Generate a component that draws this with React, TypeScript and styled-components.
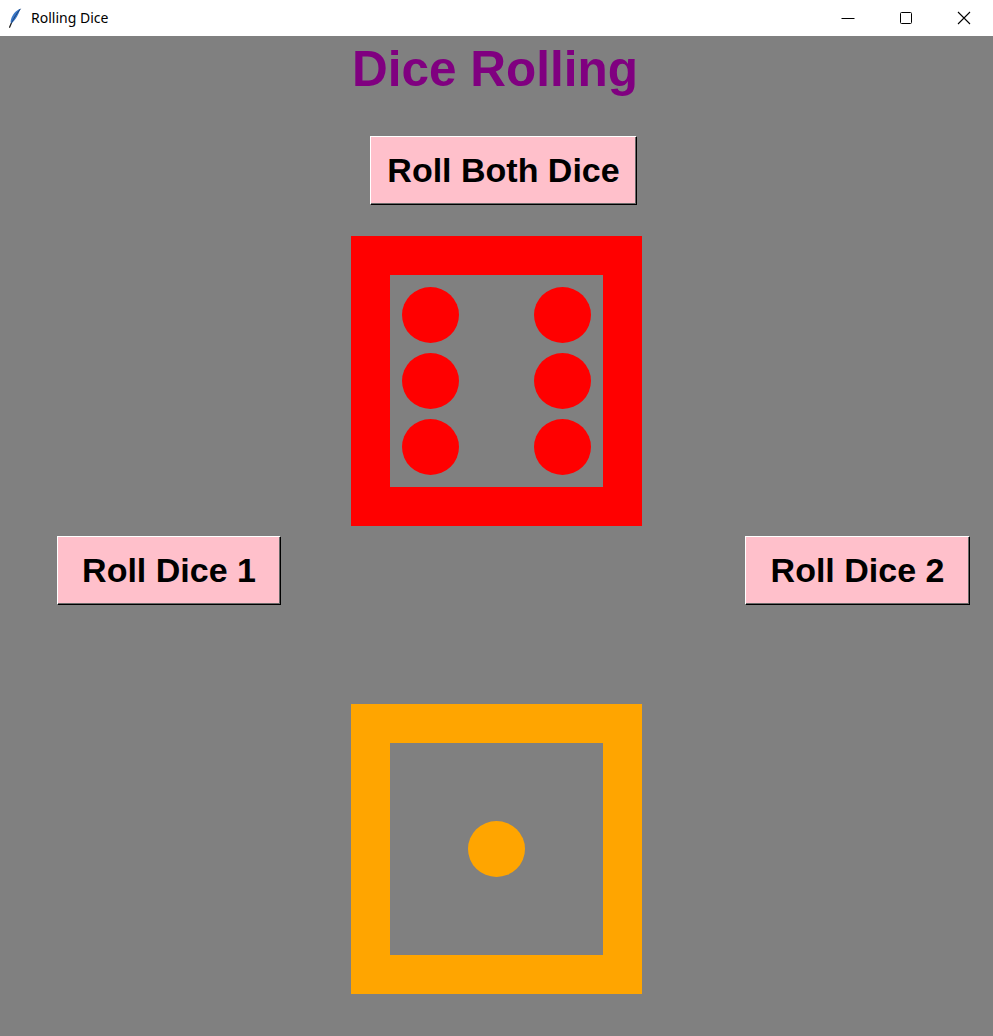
import React from 'react';
import styled, { createGlobalStyle } from 'styled-components';

const GlobalStyle = createGlobalStyle`
  html, body {
    margin: 0;
    padding: 0;
    background: #808080;
    overflow: hidden;
  }

  body {
    font-family: 'Liberation Sans', Arial, sans-serif;
  }

  #root {
    width: 993px;
    height: 1036px;
  }
`;

const Window = styled.div`
  width: 993px;
  height: 1036px;
  display: flex;
  flex-direction: column;
  background: #808080;
`;

const TitleBar = styled.div`
  height: 36px;
  flex: none;
  display: flex;
  align-items: center;
  background: #ffffff;
`;

const AppIcon = styled.svg`
  width: 14px;
  height: 20px;
  margin: 0 9px 0 8px;
  flex: none;
`;

const WindowTitle = styled.span`
  flex: 1;
  font-family: 'Noto Sans', 'Open Sans', sans-serif;
  font-size: 14px;
  color: #000000;
  padding-bottom: 1px;
`;

const ControlButton = styled.div`
  width: 58px;
  height: 36px;
  display: flex;
  align-items: center;
  justify-content: center;
`;

const Canvas = styled.main`
  flex: 1;
  display: grid;
  grid-template-columns: 57px 224px 70px 291px 103px 225px;
  grid-template-rows: 100px 69px 31px 290px 10px 69px 99px 290px;
`;

const Title = styled.h1`
  grid-column: 4;
  grid-row: 1;
  justify-self: center;
  align-self: start;
  margin: 8px 0 0 -3px;
  font-family: 'Liberation Sans', Arial, sans-serif;
  font-weight: 700;
  font-size: 49.5px;
  line-height: 1;
  white-space: nowrap;
  color: #800080;
`;

const RollButton = styled.button<{ $col: number; $row: number; $shift?: number }>`
  grid-column: ${(p) => p.$col};
  grid-row: ${(p) => p.$row};
  justify-self: ${(p) => (p.$shift !== undefined ? 'center' : 'stretch')};
  margin-left: ${(p) => (p.$shift ?? 0) * 2}px;
  display: flex;
  align-items: center;
  justify-content: center;
  box-sizing: border-box;
  height: 69px;
  padding: 0 16px;
  background: #ffc0cb;
  border: 1px solid;
  border-color: #ffffff #000000 #000000 #ffffff;
  box-shadow: inset -1px -1px 0 #696969;
  font-family: 'Liberation Sans', Arial, sans-serif;
  font-weight: 700;
  font-size: 34px;
  white-space: nowrap;
  color: #000000;
  cursor: pointer;
`;

const DieFrame = styled.div<{ $color: string; $row: number }>`
  grid-column: 4;
  grid-row: ${(p) => p.$row};
  box-sizing: border-box;
  width: 291px;
  height: 290px;
  border: 39px solid ${(p) => p.$color};
  background: #808080;
  display: grid;
  grid-template-columns: repeat(3, 57px);
  grid-template-rows: repeat(3, 56px);
  gap: 10px 9px;
  padding: 12px 12px;
`;

const Pip = styled.span<{ $color: string; $r: number; $c: number }>`
  grid-row: ${(p) => p.$r};
  grid-column: ${(p) => p.$c};
  border-radius: 50%;
  background: ${(p) => p.$color};
`;

const FACES: Record<number, [number, number][]> = {
  1: [[2, 2]],
  2: [[1, 1], [3, 3]],
  3: [[1, 1], [2, 2], [3, 3]],
  4: [[1, 1], [1, 3], [3, 1], [3, 3]],
  5: [[1, 1], [1, 3], [2, 2], [3, 1], [3, 3]],
  6: [[1, 1], [2, 1], [3, 1], [1, 3], [2, 3], [3, 3]],
};

function Die({ value, color, row }: { value: number; color: string; row: number }) {
  return (
    <DieFrame $color={color} $row={row}>
      {FACES[value].map(([r, c]) => (
        <Pip key={`${r}-${c}`} $color={color} $r={r} $c={c} />
      ))}
    </DieFrame>
  );
}

export default function App() {
  const [dice1, setDice1] = React.useState(6);
  const [dice2, setDice2] = React.useState(1);
  const roll = () => Math.floor(Math.random() * 6) + 1;

  return (
    <>
      <GlobalStyle />
      <Window>
        <TitleBar>
          <AppIcon viewBox="0 0 14 20">
            <path d="M12.5 0.8 C8.5 2 4.5 6 3 11.5 C2.4 13.5 2.6 15 3.2 15.6 C6.5 13 10 8 12.5 0.8 Z" fill="#3a78c8" />
            <path d="M12.5 0.8 C9 5 6 10 3.2 15.6" stroke="#1a3c6e" strokeWidth="0.9" fill="none" />
            <path d="M3.2 15.6 L1.6 19.2" stroke="#202020" strokeWidth="1.3" strokeLinecap="round" />
          </AppIcon>
          <WindowTitle>Rolling Dice</WindowTitle>
          <ControlButton>
            <svg width="14" height="14" viewBox="0 0 14 14">
              <path d="M0.5 7.5 H13.5" stroke="#000" strokeWidth="1" />
            </svg>
          </ControlButton>
          <ControlButton>
            <svg width="14" height="14" viewBox="0 0 14 14">
              <rect x="1.5" y="1.5" width="11" height="11" rx="1" stroke="#000" strokeWidth="1" fill="none" />
            </svg>
          </ControlButton>
          <ControlButton>
            <svg width="14" height="14" viewBox="0 0 14 14">
              <path d="M1 1 L13 13 M13 1 L1 13" stroke="#000" strokeWidth="1.1" />
            </svg>
          </ControlButton>
        </TitleBar>
        <Canvas>
          <Title>Dice Rolling</Title>
          <RollButton
            $col={4}
            $row={2}
            $shift={7}
            onClick={() => {
              setDice1(roll());
              setDice2(roll());
            }}
          >
            Roll Both Dice
          </RollButton>
          <Die value={dice1} color="#ff0000" row={4} />
          <RollButton $col={2} $row={6} onClick={() => setDice1(roll())}>
            Roll Dice 1
          </RollButton>
          <RollButton $col={6} $row={6} onClick={() => setDice2(roll())}>
            Roll Dice 2
          </RollButton>
          <Die value={dice2} color="#ffa500" row={8} />
        </Canvas>
      </Window>
    </>
  );
}
